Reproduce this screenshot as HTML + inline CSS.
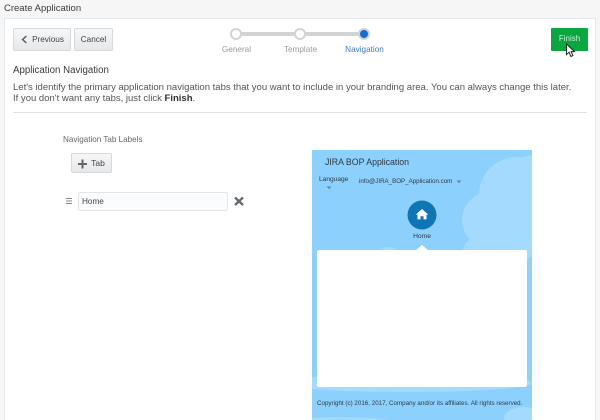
<!DOCTYPE html>
<html>
<head>
<meta charset="utf-8">
<style>
html,body{margin:0;padding:0}
body{width:600px;height:420px;overflow:hidden;background:#f6f6f6;font-family:"Liberation Sans",sans-serif;position:relative;color:#444}
.a{position:absolute;white-space:nowrap}
.btn{position:absolute;box-sizing:border-box;background:linear-gradient(#f6f7f8,#e6e8ea);border:1px solid #d5d9dc;border-radius:2px;font-size:8.2px;color:#444;text-align:center}
</style>
</head>
<body>
<div class="a" style="left:4px;top:2px;font-size:9.5px;line-height:13px;color:#3c3c3c">Create Application</div>
<div class="a" style="left:4px;top:18px;width:592px;height:402px;background:#fff;border:1px solid #e3e8ec;border-bottom:0;box-sizing:border-box"></div>

<div class="btn" style="left:13px;top:28px;width:58px;height:23px;line-height:21px;padding-left:12px">Previous</div>
<svg class="a" style="left:20px;top:34px" width="9" height="11" viewBox="0 0 9 11"><path d="M6.4 2 2.6 5.5l3.8 3.5" fill="none" stroke="#5c5c5c" stroke-width="1.5"/></svg>
<div class="btn" style="left:74px;top:28px;width:39px;height:23px;line-height:21px">Cancel</div>

<div class="a" style="left:236px;top:32px;width:128px;height:4px;background:#d3d3d3"></div>
<div class="a" style="left:230px;top:28px;width:12px;height:12px;box-sizing:border-box;border-radius:50%;background:#fff;border:2.5px solid #d3d3d3"></div>
<div class="a" style="left:294px;top:28px;width:12px;height:12px;box-sizing:border-box;border-radius:50%;background:#fff;border:2.5px solid #d3d3d3"></div>
<div class="a" style="left:358px;top:28px;width:12px;height:12px;box-sizing:border-box;border-radius:50%;background:#0f6fd0;border:2.5px solid #d3d3d3"></div>
<div class="a" style="left:206.5px;top:44px;width:60px;text-align:center;font-size:8.2px;line-height:12px;color:#9b9b9b">General</div>
<div class="a" style="left:270.5px;top:44px;width:60px;text-align:center;font-size:8.2px;line-height:12px;color:#9b9b9b">Template</div>
<div class="a" style="left:334.5px;top:44px;width:60px;text-align:center;font-size:8.2px;line-height:12px;color:#3f7fbf">Navigation</div>

<div class="a" style="left:551px;top:28px;width:37px;height:23px;background:#0aa63f;border-radius:1px;color:#cdeed8;font-size:8px;line-height:22px;text-align:center">Finish</div>
<svg class="a" style="left:565px;top:43px" width="12" height="15" viewBox="0 0 12 15"><path d="M1.5 1v10.5l2.6-2.2 1.8 4.2 2-.9-1.8-4h3.4z" fill="#fff" stroke="#222" stroke-width="1"/></svg>

<div class="a" style="left:13px;top:64px;font-size:9.7px;line-height:14px;color:#3a3a3a">Application Navigation</div>
<div class="a" style="left:13px;top:82px;font-size:9.53px;line-height:11px;color:#555">Let's identify the primary application navigation tabs that you want to include in your branding area. You can always change this later.<br>If you don't want any tabs, just click <b style="color:#333">Finish</b>.</div>
<div class="a" style="left:13px;top:112px;width:574px;height:1px;background:#e0e3e5"></div>

<div class="a" style="left:63px;top:134px;font-size:8.1px;line-height:12px;color:#666">Navigation Tab Labels</div>
<div class="btn" style="left:71px;top:153px;width:41px;height:20px;line-height:19px;padding-left:13px;font-size:8.5px">Tab</div>
<svg class="a" style="left:77px;top:159px" width="10" height="10" viewBox="0 0 10 10"><path d="M5.5 .5v9M1 5h9" stroke="#666" stroke-width="2"/></svg>
<svg class="a" style="left:65px;top:197px" width="8" height="8" viewBox="0 0 8 8"><path d="M1 1.5h6M1 4h6M1 6.5h6" stroke="#888" stroke-width="1"/></svg>
<div class="a" style="left:78px;top:192px;width:149.5px;height:19px;box-sizing:border-box;background:#fbfcfd;border:1px solid #e2e6e9;border-radius:2px;font-size:8.2px;line-height:17px;padding-left:3px;color:#444">Home</div>
<svg class="a" style="left:233px;top:195px" width="12" height="12" viewBox="0 0 12 12"><path d="M2 2.5l8 7.5M10 2.5l-8 7.5" stroke="#666b70" stroke-width="2.4"/></svg>

<svg class="a" style="left:312px;top:150px" width="220" height="270" viewBox="0 0 220 270">
<rect width="220" height="270" fill="#8cd0fd"/>
<g fill="#a4dafe">
<circle cx="205" cy="45" r="38"/>
<circle cx="222" cy="35" r="30"/>
<circle cx="178" cy="70" r="28"/>
<circle cx="205" cy="85" r="26"/>
<circle cx="170" cy="105" r="20"/>
<circle cx="76" cy="112" r="15"/>
<circle cx="132" cy="115" r="15"/>
<ellipse cx="95" cy="233" rx="125" ry="9"/>
<ellipse cx="212" cy="268" rx="20" ry="11"/>
<ellipse cx="30" cy="272" rx="50" ry="5"/>
</g>
<rect x="5" y="100" width="210" height="137" rx="2" fill="#fff"/>
<path d="M104 100l6-5 6 5z" fill="#fff"/>
<circle cx="110" cy="65" r="14.5" fill="#0f75b5"/>
<path d="M110 59l-6.3 5.6h1.8v4.8h3v-3.2h3v3.2h3v-4.8h1.8z" fill="#fff"/>
<path d="M14.5 36.5h5l-2.5 2.6zM144.5 30.5h5l-2.5 2.6z" fill="#6f8292"/>
</svg>
<div class="a" style="left:325px;top:156px;font-size:8.8px;line-height:13px;letter-spacing:-.02px;color:#2f3a44">JIRA BOP Application</div>
<div class="a" style="left:319px;top:175px;font-size:6.6px;line-height:10px;color:#2f3a44">Language</div>
<div class="a" style="left:359px;top:177px;font-size:6.2px;line-height:10px;color:#2f3a44">info@JIRA_BOP_Application.com</div>
<div class="a" style="left:392px;top:232px;width:60px;text-align:center;font-size:6.7px;line-height:10px;color:#2f3a44">Home</div>
<div class="a" style="left:317px;top:399px;font-size:6.2px;line-height:10px;letter-spacing:.02px;color:#2f3a44">Copyright (c) 2016, 2017, Company and/or its affiliates. All rights reserved.</div>
</body>
</html>
